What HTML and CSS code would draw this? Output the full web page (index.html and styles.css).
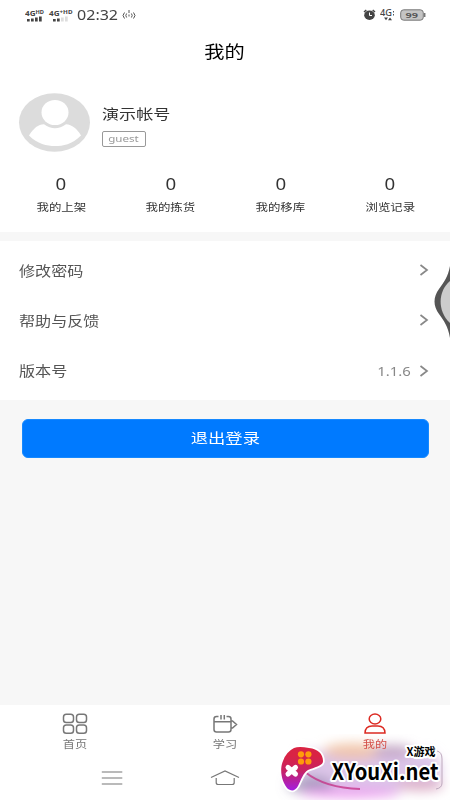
FILE: index.html
```html
<!DOCTYPE html>
<html lang="zh-CN">
<head>
<meta charset="utf-8">
<title>我的</title>
<link rel="stylesheet" href="styles.css">
</head>
<body>
<div class="screen">
  <header class="status">
    <svg class="signals" width="50" height="14" viewBox="0 0 50 14">
      <g class="tiny"><text x="0" y="6.6" textLength="10.5" lengthAdjust="spacingAndGlyphs">4G</text><text class="hd" x="10.500" y="4.800" textLength="8.500" lengthAdjust="spacingAndGlyphs">HD</text><text x="24" y="6.6" textLength="10.500" lengthAdjust="spacingAndGlyphs">4G</text><text class="hd" x="34.500" y="4.800" textLength="13" lengthAdjust="spacingAndGlyphs">+HD</text></g>
      <g fill="#444"><path d="M2 10h2.700v2.500H2zM6 9.500h2.700v3H6zM10 8.500h2.700v4H10zM14 7.500h2.700v5H14zM28 10h2.700v2.500H28zM32 9.500h2.700v3H32z"/><path fill="#ddd" d="M36 8.500h2.700v4H36zM40 7.500h2.700v5H40z"/></g>
    </svg>
    <span class="clock"><span class="wide left">02:32</span></span>
    <svg class="hotspot" width="14" height="12" viewBox="0 0 14 12" fill="none" stroke="#555" stroke-width="1"><path d="M2.500 3.500Q-.5 6.500 2.500 9.500M4.600 4.500Q3 6.500 4.600 8.500M11.500 3.500q3 3 0 6M9.400 4.500Q11 6.500 9.400 8.500M7 1v3M7 5.500v2"/></svg>
    <div class="status-right">
      <svg width="13" height="12" viewBox="0 0 13 12"><ellipse cx="6.500" cy="6.200" rx="5.300" ry="4.800" fill="#444"/><path d="M1 3 3.300 1M12 3 9.700 1" stroke="#444" stroke-width="1.500"/><path d="M6.500 3.500v3H9" fill="none" stroke="#fff"/></svg>
      <svg width="16" height="14" viewBox="0 0 16 14"><text class="tiny net" x="0" y="7.500" textLength="12" lengthAdjust="spacingAndGlyphs">4G</text><path d="M13.500 3v1.500M13.500 6v1.500" stroke="#555"/><path d="M4 9.500h4l-2 2.700zM8 12.200h4l-2-2.700z" fill="#444"/></svg>
      <svg width="26" height="12" viewBox="0 0 26 12"><rect x=".7" y=".8" width="22.600" height="10.400" rx="3" fill="#c4c4c4" stroke="#777"/><path d="M24.700 4v4" stroke="#777" stroke-width="1.500"/><text class="batt" x="5.500" y="9" textLength="12.500" lengthAdjust="spacingAndGlyphs">99</text></svg>
    </div>
  </header>
  <h1 class="title"><span class="wide">我的</span></h1>

  <section class="profile">
    <div class="user">
      <svg class="avatar" width="72" height="60" viewBox="0 0 72 60"><ellipse cx="36.500" cy="29.500" rx="35.500" ry="29.200" fill="#dcdcdc"/><ellipse cx="37" cy="19.500" rx="13.500" ry="12.600" fill="#fff"/><path d="M11 42.500C16 35 20 31.500 26 31.300q5.500 4 11 4t11-4C54 31.500 59 36 63 42.500 54 51.500 45 53 37 53S19.500 51 11 42.500Z" fill="#fff"/></svg>
      <div class="who">
        <div class="name"><span class="wide left">演示帐号</span></div>
        <div class="role"><span class="wide">guest</span></div>
      </div>
    </div>
    <div class="stats">
      <div class="stat"><b class="wide">0</b><span class="wide">我的上架</span></div>
      <div class="stat"><b class="wide">0</b><span class="wide">我的拣货</span></div>
      <div class="stat"><b class="wide">0</b><span class="wide">我的移库</span></div>
      <div class="stat"><b class="wide">0</b><span class="wide">浏览记录</span></div>
    </div>
  </section>

  <section class="list">
    <div class="row"><span class="wide left">修改密码</span><svg width="10" height="14" viewBox="0 0 10 14"><path d="M1.500 2 8 7l-6.500 5"/></svg></div>
    <div class="row"><span class="wide left">帮助与反馈</span><svg width="10" height="14" viewBox="0 0 10 14"><path d="M1.500 2 8 7l-6.500 5"/></svg></div>
    <div class="row"><span class="wide left">版本号</span><span class="wide right version">1.1.6</span><svg width="10" height="14" viewBox="0 0 10 14"><path d="M1.500 2 8 7l-6.500 5"/></svg></div>
  </section>

  <main class="rest"><div class="logout"><span class="wide">退出登录</span></div></main>

  <nav class="tabs">
    <div class="tab">
      <svg width="28" height="24" viewBox="0 0 28 24"><rect x="2.500" y="2.200" width="10" height="8.300" rx="2.800"/><rect x="15.500" y="2.200" width="10" height="8.300" rx="2.800"/><rect x="2.500" y="13" width="10" height="8.300" rx="2.800"/><rect x="15.500" y="13" width="10" height="8.300" rx="2.800"/></svg>
      <span class="wide">首页</span>
    </div>
    <div class="tab">
      <svg width="28" height="24" viewBox="0 0 28 24"><path d="M7.500 4.500H5.500Q3 4.500 3 7v10.500Q3 20 5.500 20h12q2.500 0 2.500-2.500V7q0-2.500-2.500-2.500h-2M3 9.800h17M20 9h1.500l4 3.500-4 3.500H20M10 3v4.500M13.300 3v4.500"/></svg>
      <span class="wide">学习</span>
    </div>
    <div class="tab active">
      <svg width="28" height="24" viewBox="0 0 28 24"><ellipse cx="14" cy="7" rx="5.800" ry="5"/><path d="M4 21q.3-7 7-7h6q6.700 0 7 7Z"/></svg>
      <span class="wide">我的</span>
    </div>
  </nav>
  <footer class="system">
    <svg width="22" height="16" viewBox="0 0 22 16"><path d="M.8 2h20.500M.8 8h20.500M.8 14h20.500"/></svg>
    <svg width="30" height="18" viewBox="0 0 30 18"><path d="M1 8.500 15 2l14 6.500M6.200 9v4.500q0 2 2 2h14q2 0 2-2V9"/></svg>
    <i></i>
  </footer>

  <svg class="edge" width="18" height="80" viewBox="0 0 18 80"><path d="M18 3C16 14 12 19 7 26 1 34 1 43 7 51c5 7 9 12 11 24Z" fill="#555"/><path d="M18 18C6 28 5 48 18 60Z" fill="#ccc"/></svg>

  <svg class="brand" width="190" height="66" viewBox="260 734 190 66">
    <defs>
      <filter id="haze" x="-30%" y="-60%" width="160%" height="220%"><feGaussianBlur stdDeviation="6"/></filter>
      <linearGradient id="pad" x1="0" y1="0" x2="0" y2="1"><stop offset=".2" stop-color="#d92344"/><stop offset=".55" stop-color="#c72364"/><stop offset="1" stop-color="#a31ee0"/></linearGradient>
    </defs>
    <g filter="url(#haze)">
      <path d="M300 752h132l10 14-4 22-60 4-75-5Z" fill="#dcc5e8"/>
      <ellipse cx="353" cy="751" rx="30" ry="8" fill="#f0bfa0" opacity=".85"/>
      <ellipse cx="393" cy="751" rx="20" ry="6" fill="#ad86ad" opacity=".7"/>
      <ellipse cx="310" cy="785" rx="23" ry="8" fill="#8a83a8" opacity=".7"/>
      <ellipse cx="350" cy="793" rx="50" ry="5" fill="#ed9ef0"/>
      <ellipse cx="420" cy="785" rx="24" ry="6" fill="#ddb0c7"/>
    </g>
    <path d="M305 772q20 16 55 17" fill="none" stroke="#c42d83" stroke-width="2" opacity=".75"/>
    <path d="M437 751q5 1 5 8v24q0 5-6 6" fill="none" stroke="#bda8bd"/>
    <path d="M294 748Q299 746 309 748C318 749 323 754 323 761C323 766 315 767 308 770C303 773 301 780 298 786Q294 793 288 789C282 783 279 770 283 761Q286 752 294 748Z" fill="url(#pad)" stroke="#fff" stroke-width="3.500" paint-order="stroke"/>
    <g fill="#ff9c0b"><circle cx="301" cy="754.300" r="3.100"/><circle cx="308.400" cy="754.300" r="3.100"/><circle cx="301" cy="761.500" r="3.100"/><circle cx="308.400" cy="761.500" r="3.100"/></g>
    <path d="M288 767.500l7.500 6.500M295.500 767.500l-7.500 6.500" stroke="#fff" stroke-width="5" stroke-linecap="round"/>
    <text class="brand-small" x="406.500" y="756" textLength="29" lengthAdjust="spacingAndGlyphs">X游戏</text>
    <text class="brand-big" x="331.500" y="779.600" textLength="107" lengthAdjust="spacingAndGlyphs">XYouXi.net</text>
  </svg>
</div>
</body>
</html>
```
FILE: styles.css
```css
* { box-sizing: border-box; }
body { margin: 0; font-family: "Noto Sans", "Noto Sans CJK SC", sans-serif; color: #333; background: #fff; }
svg { display: block; flex: none; }
.screen { position: relative; width: 450px; height: 800px; overflow: hidden; display: flex; flex-direction: column; background: #fff; }
.wide { display: inline-block; transform: scaleX(1.22); white-space: nowrap; }
.left { transform-origin: left center; }
.right { transform-origin: right center; }

.status { height: 30px; display: flex; align-items: center; padding: 0 24px 0 25px; }
.clock { width: 45px; margin-left: 2px; font-size: 13.500px; line-height: 20px; color: #444; }
.clock .wide { transform: scaleX(1.19); }
.signals { margin-top: 1px; }
.status-right { margin-left: auto; display: flex; align-items: center; gap: 4px; }
.tiny { font: bold 7px "Noto Sans", sans-serif; fill: #444; }
.hd { font-size: 4.800px; }
.net { font-size: 8px; font-weight: 500; }
.batt { font: bold 7.500px "Noto Sans", sans-serif; fill: #555; }
.title { height: 42px; margin: 0; text-align: center; font-size: 16.600px; font-weight: 400; line-height: 43px; color: #000; }

.profile { height: 160px; padding: 21px 5px 0; }
.user { display: flex; padding-left: 13px; height: 60px; }
.who { padding: 10px 0 0 11.500px; }
.name { height: 20px; font-size: 14px; line-height: 21px; }
.role { width: 44px; height: 16px; margin-top: 8px; border: 1px solid #999; border-radius: 2px; color: #999; font-size: 9.500px; line-height: 14px; text-align: center; }
.stats { display: grid; grid-template-columns: repeat(4, 1fr); padding: 19px 0 0 1px; }
.stat { display: flex; flex-direction: column; align-items: center; }
.stat b { font-weight: 400; font-size: 17px; line-height: 23px; transform: scaleX(1.1); }
.stat span { font-size: 10.200px; line-height: 16px; margin-top: 4px; }

.list { border-top: 9px solid #f7f7f7; padding: 4px 21px 5px 19px; height: 168px; }
.row { height: 50.300px; display: flex; align-items: center; font-size: 13.200px; color: #555; }
.row svg { margin-left: auto; fill: none; stroke: #888; stroke-width: 1.700; }
.version { margin-left: auto; color: #888; transform: scaleX(1.13); }
.row .version + svg { margin-left: 8px; }

.rest { flex: 1; background: #f7f7f7; padding: 19px 21px 0 22px; }
.logout { height: 39px; border: 1px solid #1689ff; border-radius: 6px; background: #007aff; color: #fff; text-align: center; font-size: 14.200px; line-height: 36px; }

.tabs { height: 51px; display: grid; grid-template-columns: repeat(3, 1fr); padding-top: 7px; }
.tab { display: flex; flex-direction: column; align-items: center; font-size: 10px; line-height: 17px; color: #777; }
.tab svg { fill: none; stroke: currentColor; stroke-width: 1.500; }
.active { color: #dc2a22; }
.active .wide { position: relative; z-index: 1; color: #d4504a; }
.system { height: 44px; display: grid; grid-template-columns: 1fr 1fr 1fr; width: 338px; align-self: center; align-items: center; justify-items: center; }
.system svg { fill: none; stroke: #777; stroke-width: 1.200; }

.edge { position: absolute; right: 0; top: 263px; }
.brand { position: absolute; right: 0; bottom: 0; }
.brand-small, .brand-big { font-family: "Noto Sans CJK SC", sans-serif; font-weight: 700; fill: #000; stroke: #fff; stroke-width: 4px; stroke-linejoin: round; paint-order: stroke; }
.brand-small { font-size: 11px; }
.brand-big { font-size: 22px; }
```
